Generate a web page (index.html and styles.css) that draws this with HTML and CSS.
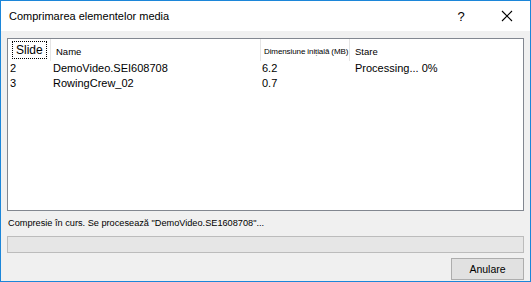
FILE: index.html
```html
<!DOCTYPE html>
<html lang="ro">
<head>
<meta charset="UTF-8" />
<title>Comprimarea elementelor media</title>
<link rel="stylesheet" href="styles.css">
</head>
<body>

<div class="window">
  <div class="titlebar">
    <span class="title">Comprimarea elementelor media</span>
    <span class="help">?</span>
    <span class="close">
      <svg width="12" height="12" viewBox="0 0 12 12"><path d="M1 1 L11 11 M11 1 L1 11" stroke="#000" stroke-width="1.1" fill="none"/></svg>
    </span>
  </div>

  <div class="content">
    <div class="list">
      <div class="head">
        <div class="col c-slide"><span class="focus">Slide</span></div>
        <div class="col c-name">Name</div>
        <div class="col c-size small">Dimensiune inițială (MB)</div>
        <div class="col c-state">Stare</div>
      </div>
      <div class="row">
        <div class="c-slide">2</div>
        <div class="c-name">DemoVideo.SEI608708</div>
        <div class="c-size">6.2</div>
        <div class="c-state">Processing... 0%</div>
      </div>
      <div class="row">
        <div class="c-slide">3</div>
        <div class="c-name">RowingCrew_02</div>
        <div class="c-size">0.7</div>
        <div class="c-state"></div>
      </div>
    </div>

    <div class="status">Compresie în curs. Se procesează "DemoVideo.SE1608708"...</div>
    <div class="progress"></div>

    <div class="actions">
      <button class="btn">Anulare</button>
    </div>
  </div>
</div>

</body>
</html>
```

FILE: styles.css
```css
body {
  margin: 0;
  font-family: "Liberation Sans", Arial, sans-serif;
  color: #000;
  background: #f0f0f0;
}
.window {
  box-sizing: border-box;
  width: 531px;
  height: 282px;
  border: 1px solid #1c86d9;
  background: #f0f0f0;
}
.titlebar {
  height: 30px;
  background: #fff;
  display: flex;
  align-items: center;
  padding-left: 8px;
}
.title {
  font-size: 11px;
  flex: 1;
}
.help {
  font-size: 13px;
  width: 46px;
  text-align: center;
}
.close {
  width: 46px;
  display: flex;
  justify-content: center;
  align-items: center;
}
.content {
  padding: 7px 6px 0 6px;
}
.list {
  height: 171px;
  border: 1px solid #828790;
  background: #fff;
}
.head {
  display: grid;
  grid-template-columns: 43px 210px 89px 1fr;
  height: 22px;
}
.head .col {
  border-right: 1px solid #e5e5e5;
  font-size: 9.5px;
  display: flex;
  align-items: center;
  padding-left: 5px;
  padding-top: 3px;
  box-sizing: border-box;
}
.head .col.c-slide {
  font-size: 12px;
  padding-left: 4px;
  padding-top: 0;
}
.head .col.c-state {
  border-right: none;
}
.head .small {
  font-size: 8px;
  padding-left: 3px;
  letter-spacing: -0.1px;
}
.focus {
  border: 1px dotted #000;
  padding: 1px 3px;
}
.row {
  display: grid;
  grid-template-columns: 43px 210px 89px 1fr;
  height: 15px;
  font-size: 11px;
  line-height: 15px;
}
.row .c-slide {
  padding-left: 2px;
}
.row .c-name {
  padding-left: 2px;
}
.row .c-size {
  padding-left: 1px;
}
.row .c-state {
  padding-left: 5px;
}
.status {
  font-size: 9.2px;
  margin-top: 6px;
  padding-left: 1px;
  height: 13px;
  line-height: 13px;
}
.progress {
  margin-top: 6px;
  height: 15px;
  border: 1px solid #bcbcbc;
  background: #e6e6e6;
}
.actions {
  display: flex;
  justify-content: flex-end;
  margin-top: 5px;
}
.btn {
  width: 73px;
  height: 22px;
  border: 1px solid #adadad;
  background: #e1e1e1;
  font-family: "Liberation Sans", Arial, sans-serif;
  font-size: 10.5px;
  color: #000;
  padding: 0;
}
```
